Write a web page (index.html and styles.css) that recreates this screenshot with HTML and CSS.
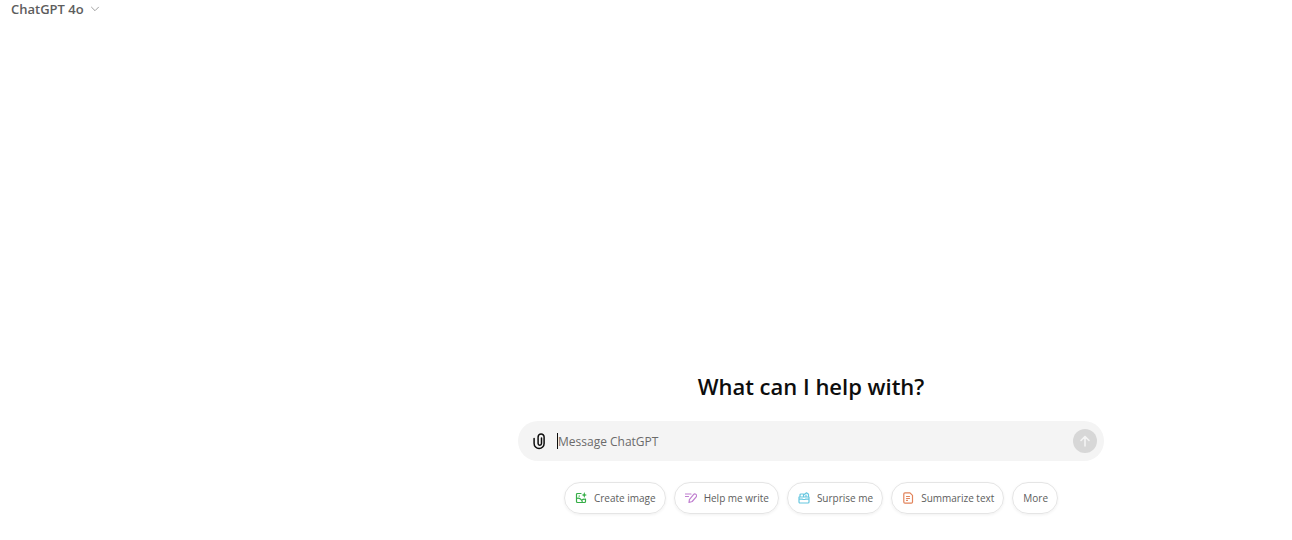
FILE: index.html
```html
<!DOCTYPE html>
<html lang="en">
<head>
    <meta charset="UTF-8">
    <meta name="viewport" content="width=device-width, initial-scale=1.0">
    <title>ChatGPT</title>
    <link rel="stylesheet" href="styles.css">
</head>
<body>
    <header>
        <button type="button" class="model">
            ChatGPT 4o
            <svg width="10" height="10" viewBox="0 0 10 10"><path d="M1.5 3.2 5 6.7 8.5 3.2"/></svg>
        </button>
    </header>

    <main>
        <h1>What can I help with?</h1>

        <form class="composer">
            <button type="button" class="attach" aria-label="Attach file">
                <svg width="16" height="18" viewBox="0 0 16 18"><path d="M10.500 6v5.500a1.700 1.700 0 0 1-3.400 0V5a3 3 0 0 1 6 0v6.500a5 5 0 0 1-10 0V6.500"/></svg>
            </button>
            <span class="caret"></span>
            <input type="text" name="message" aria-label="Message ChatGPT" placeholder="Message ChatGPT">
            <button type="submit" class="send" aria-label="Send">
                <svg width="14" height="14" viewBox="0 0 14 14"><path d="M7 12V2.500M3 6.500l4-4 4 4"/></svg>
            </button>
        </form>

        <div class="chips">
            <button type="button">
                <svg class="green" viewBox="0 0 12 12"><path d="M6 1.500H2.500a1 1 0 0 0-1 1v7a1 1 0 0 0 1 1h7a1 1 0 0 0 1-1V7M1.500 6.500C4.500 5.500 7 7.500 7.500 10.500M7 8c1.200-1 2.300-1 3.500-.5M4.200 3.800v.4"/><path class="solid" d="M9.300 0l.8 2.200 2 .8-2 .8-.8 2.200-.8-2.200-2-.8 2-.8z"/></svg>
                Create image
            </button>
            <button type="button">
                <svg class="purple" viewBox="0 0 12 12"><path d="M.5 2h5.500M.5 4.500h3M4 10.500l.4-2.900L8.500 2.600a1.700 1.700 0 0 1 2.700 2.200L7.200 9.500 4 10.500"/></svg>
                Help me write
            </button>
            <button type="button">
                <svg class="blue" viewBox="0 0 12 12"><path d="M1 5h10v5a1 1 0 0 1-1 1H2a1 1 0 0 1-1-1zM1 7.200h3.500M7.500 7.200H11M5 7.500h2M2 5V3a1 1 0 0 1 1-1h2.500v3M5.500 3 8.500.8l2 1.500V5M8 3v1.500"/></svg>
                Surprise me
            </button>
            <button type="button">
                <svg class="orange" viewBox="0 0 12 12"><path d="M3 .8h5l2.500 2.500V10a1.200 1.200 0 0 1-1.200 1.200H3A1.200 1.200 0 0 1 1.800 10V2A1.200 1.200 0 0 1 3 .8zM4.500 4.500h3M4.500 6.500h3M4.500 8.300h1"/></svg>
                Summarize text
            </button>
            <button type="button">More</button>
        </div>
    </main>
</body>
</html>
```

FILE: styles.css
```css
* { box-sizing: border-box; }
body {
    margin: 0;
    min-height: 100vh;
    display: flex;
    flex-direction: column;
    background: #fff;
    font-family: "Open Sans", "Noto Sans", sans-serif;
}
button {
    font-family: inherit;
    padding: 0;
    border: none;
    background: none;
    cursor: pointer;
}
svg {
    fill: none;
    stroke: currentColor;
    stroke-linecap: round;
    stroke-linejoin: round;
    flex-shrink: 0;
}
header { padding-left: 11px; }
.model {
    display: flex;
    align-items: center;
    gap: 6px;
    height: 18px;
    font-size: 13px;
    font-weight: 600;
    color: #5d5d5d;
}
.model svg { color: #a0a0a0; }

main {
    flex: 1;
    display: flex;
    flex-direction: column;
    align-items: center;
    justify-content: flex-end;
    padding: 0 0 26px 330px;
}
h1 {
    margin: 0 0 19px;
    font-size: 22px;
    font-weight: 600;
    line-height: 32px;
    color: #0d0d0d;
}

.composer {
    display: flex;
    align-items: center;
    width: 100%;
    max-width: 586px;
    height: 40px;
    padding: 0 7px 0 13px;
    border-radius: 20px;
    background: #f4f4f4;
}
.attach {
    display: flex;
    margin-right: 10px;
    color: #0d0d0d;
}
.attach svg { stroke-width: 1.5; }
.caret { width: 1px; height: 16px; background: #0d0d0d; }
.composer input {
    flex: 1;
    min-width: 0;
    padding: 0;
    border: none;
    outline: none;
    background: none;
    font-family: inherit;
    font-size: 12px;
    color: #0d0d0d;
}
.composer input::placeholder { color: #6b6b6b; opacity: 1; }
.send {
    display: flex;
    align-items: center;
    justify-content: center;
    width: 24px;
    height: 24px;
    border-radius: 50%;
    background: #d7d7d7;
    color: #f4f4f4;
}
.send svg { stroke-width: 1.6; }

.chips {
    display: flex;
    justify-content: center;
    gap: 8px;
    margin-top: 21px;
}
.chips button {
    display: flex;
    align-items: center;
    gap: 7px;
    height: 32px;
    padding: 0 9px 0 10px;
    border: 1px solid #e5e5e5;
    border-radius: 16px;
    box-shadow: 0 1px 3px rgba(0, 0, 0, 0.06);
    font-size: 10px;
    white-space: nowrap;
    color: #5d5d5d;
}
.chips svg { width: 12px; height: 12px; stroke-width: 1.2; }
.chips .solid { fill: currentColor; stroke: none; }
.green { color: #35ae47; }
.purple { color: #c07fd0; }
.blue { color: #67c7e0; }
.orange { color: #e2835a; }
```
